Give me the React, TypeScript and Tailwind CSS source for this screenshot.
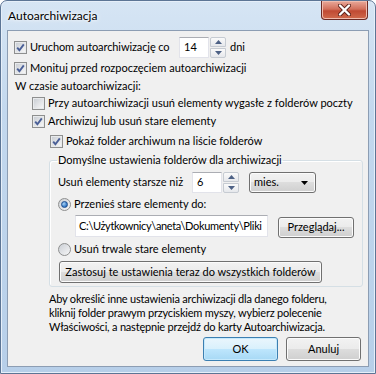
import type { ReactNode } from 'react';

const font = { fontFamily: 'Lato, "Noto Sans", sans-serif' };

function Check({ checked }: { checked?: boolean }) {
  return (
    <span className="flex h-[13px] w-[13px] shrink-0 items-center justify-center border border-[#8e8f8f] bg-white">
      <span className="flex h-[11px] w-[11px] items-center justify-center border border-[#e8eaec] bg-[linear-gradient(135deg,#cbcfd5,#f6f6f6)]">
        {checked && (
          <svg width="9" height="9" viewBox="0 0 9 9">
            <path d="M1.2 4.6 L3.4 7.2 L7.8 1.4" fill="none" stroke="#4a5f97" strokeWidth="1.9" />
          </svg>
        )}
      </span>
    </span>
  );
}

function Radio({ checked }: { checked?: boolean }) {
  return (
    <span className="flex h-[13px] w-[13px] shrink-0 items-center justify-center rounded-full border border-[#8e8f8f] bg-[linear-gradient(135deg,#cbcfd5,#f6f6f6)]">
      {checked && (
        <span className="h-[7px] w-[7px] rounded-full border border-[#1c4d8f] bg-[radial-gradient(circle_at_35%_35%,#a9d3f5,#2e74c4_70%)]" />
      )}
    </span>
  );
}

function Spinner() {
  return (
    <span className="ml-[1px] flex h-[21px] w-[16px] shrink-0 flex-col">
      <span className="flex h-[10px] items-center justify-center rounded-t-[2px] border border-[#c6cbd2] bg-[linear-gradient(#fafafa,#e6e8ec)]">
        <svg width="7" height="4" viewBox="0 0 7 4">
          <path d="M0 4 L3.5 0 L7 4 Z" fill="#4d6185" />
        </svg>
      </span>
      <span className="mt-[1px] flex h-[10px] items-center justify-center rounded-b-[2px] border border-[#c6cbd2] bg-[linear-gradient(#fafafa,#e6e8ec)]">
        <svg width="7" height="4" viewBox="0 0 7 4">
          <path d="M0 0 L3.5 4 L7 0 Z" fill="#4d6185" />
        </svg>
      </span>
    </span>
  );
}

function Input({ value, className }: { value: string; className?: string }) {
  return (
    <span
      className={`flex h-[21px] shrink-0 items-center overflow-hidden whitespace-nowrap border border-[#e2e3ea] border-t-[#abadb3] bg-white px-[4px] ${className ?? ''}`}
    >
      {value}
    </span>
  );
}

function Button({ children, className, def }: { children: ReactNode; className?: string; def?: boolean }) {
  return (
    <span
      className={`flex shrink-0 items-center justify-center whitespace-nowrap rounded-[3px] border ${
        def
          ? 'border-[#3c7fb1] bg-[linear-gradient(#eaf6fd,#d9f0fc_50%,#bee6fd_50%,#a7d9f5)] shadow-[inset_0_0_0_1px_#c6e9fc]'
          : 'border-[#707070] bg-[linear-gradient(#f2f2f2,#ebebeb_50%,#dddddd_50%,#cfcfcf)] shadow-[inset_0_0_0_1px_#fbfbfb]'
      } ${className ?? ''}`}
    >
      {children}
    </span>
  );
}

export default function App() {
  return (
    <div className="h-[374px] w-[376px] overflow-hidden whitespace-nowrap bg-white text-[11px] text-black" style={font}>
      <div className="flex h-full w-full flex-col rounded-t-[7px] border border-[#5c7595] bg-[linear-gradient(180deg,#d6e5f4,#c3d8ee_30%,#b7cfe9)] shadow-[inset_0_0_0_1px_#e6eff9]">
        {/* Title bar */}
        <div className="flex h-[29px] shrink-0 items-start justify-between">
          <span className="pl-[7px] pt-[6px] text-[12px] [text-shadow:0_0_6px_#fff,0_0_3px_#fff]">Autoarchiwizacja</span>
          <span className="mr-[7px] flex h-[19px] w-[47px] items-center justify-center rounded-b-[4px] border border-t-0 border-[#6b2a24] bg-[linear-gradient(#e9a99a,#d2705c_45%,#c04a33_55%,#d06a4c)] shadow-[inset_0_0_0_1px_#f0bcae]">
            <svg width="13" height="12" viewBox="0 0 13 12">
              <path d="M2 1.5 L11 10.5 M11 1.5 L2 10.5" stroke="#5a2018" strokeWidth="4" strokeLinecap="round" />
              <path d="M2 1.5 L11 10.5 M11 1.5 L2 10.5" stroke="#fff" strokeWidth="2.4" strokeLinecap="round" />
            </svg>
          </span>
        </div>

        {/* Content panel */}
        <div className="mx-[6px] mb-[6px] flex flex-1 flex-col border border-[#8c9db3] bg-[#f0f0f0] pl-[6px] pr-[7px]">
          <div className="mt-[5px] flex h-[22px] items-center">
            <Check checked />
            <span className="ml-[3px] w-[149px] tracking-[-0.1px]">Uruchom autoarchiwizację co</span>
            <Input value="14" className="w-[30px]" />
            <Spinner />
            <span className="ml-[4px]">dni</span>
          </div>
          <div className="flex h-[20px] items-center">
            <Check checked />
            <span className="ml-[3px]">Monituj przed rozpoczęciem autoarchiwizacji</span>
          </div>
          <div className="flex h-[17px] items-center pl-[1px]">W czasie autoarchiwizacji:</div>
          <div className="flex h-[17px] items-center pl-[18px]">
            <Check />
            <span className="ml-[3px]">Przy autoarchiwizacji usuń elementy wygasłe z folderów poczty</span>
          </div>
          <div className="flex h-[19px] items-center pl-[18px]">
            <Check checked />
            <span className="ml-[3px]">Archiwizuj lub usuń stare elementy</span>
          </div>
          <div className="flex h-[20px] items-center pl-[36px]">
            <Check checked />
            <span className="ml-[3px]">Pokaż folder archiwum na liście folderów</span>
          </div>

          <fieldset className="ml-[35px] mt-[1px] w-[310px] rounded-[3px] border border-[#d5dfe5] px-[8px] pb-[3px] shadow-[inset_1px_1px_0_#fff]">
            <legend className="-ml-[1px] px-[1px] leading-[16px]">Domyślne ustawienia folderów dla archiwizacji</legend>
            <div className="mt-[3px] flex h-[23px] items-center">
              <span className="w-[134px]">Usuń elementy starsze niż</span>
              <Input value="6" className="w-[30px]" />
              <Spinner />
              <span className="ml-[10px] flex h-[21px] w-[67px] items-center justify-between rounded-[3px] border border-[#707070] bg-[linear-gradient(#f2f2f2,#ebebeb_50%,#dddddd_50%,#cfcfcf)] pl-[4px] pr-[7px] shadow-[inset_0_0_0_1px_#fbfbfb]">
                mies.
                <svg width="7" height="4" viewBox="0 0 7 4">
                  <path d="M0 0 L7 0 L3.5 4 Z" fill="#000" />
                </svg>
              </span>
            </div>
            <div className="flex h-[20px] items-center">
              <Radio checked />
              <span className="ml-[3px]">Przenieś stare elementy do:</span>
            </div>
            <div className="flex h-[24px] items-start pl-[17px]">
              <Input value="C:\Użytkownicy\aneta\Dokumenty\Pliki" className="mt-[1px] h-[22px] w-[193px] !px-[3px] tracking-[-0.35px]" />
              <Button className="ml-[10px] mt-[3px] h-[21px] w-[76px]">Przeglądaj...</Button>
            </div>
            <div className="flex h-[22px] items-center">
              <Radio />
              <span className="ml-[3px]">Usuń trwale stare elementy</span>
            </div>
            <div className="mt-[1px] flex">
              <Button className="ml-[1px] h-[22px] w-[263px]">Zastosuj te ustawienia teraz do wszystkich folderów</Button>
            </div>
          </fieldset>

          <p className="ml-[35px] mt-[5px] leading-[14px] tracking-[-0.2px]">
            Aby określić inne ustawienia archiwizacji dla danego folderu,
            <br />
            kliknij folder prawym przyciskiem myszy, wybierz polecenie
            <br />
            Właściwości, a następnie przejdź do karty Autoarchiwizacja.
          </p>

          <div className="mt-[3px] flex justify-end gap-[8px]">
            <Button def className="h-[24px] w-[75px]">OK</Button>
            <Button className="h-[24px] w-[75px]">Anuluj</Button>
          </div>
        </div>
      </div>
    </div>
  );
}
